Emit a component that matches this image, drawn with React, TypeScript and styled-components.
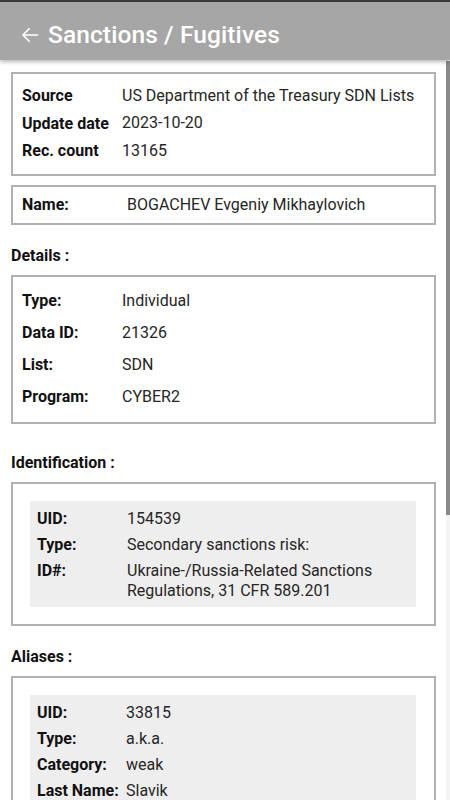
import React from 'react';
import styled, { createGlobalStyle } from 'styled-components';

interface Field {
  label: string;
  value: string;
}

const sourceInfo: Field[] = [
  { label: 'Source', value: 'US Department of the Treasury SDN Lists' },
  { label: 'Update date', value: '2023-10-20' },
  { label: 'Rec. count', value: '13165' },
];

const details: Field[] = [
  { label: 'Type:', value: 'Individual' },
  { label: 'Data ID:', value: '21326' },
  { label: 'List:', value: 'SDN' },
  { label: 'Program:', value: 'CYBER2' },
];

const identifications: Field[][] = [
  [
    { label: 'UID:', value: '154539' },
    { label: 'Type:', value: 'Secondary sanctions risk:' },
    { label: 'ID#:', value: 'Ukraine-/Russia-Related Sanctions Regulations, 31 CFR 589.201' },
  ],
];

const aliases: Field[][] = [
  [
    { label: 'UID:', value: '33815' },
    { label: 'Type:', value: 'a.k.a.' },
    { label: 'Category:', value: 'weak' },
    { label: 'Last Name:', value: 'Slavik' },
  ],
  [
    { label: 'UID:', value: '33816' },
    { label: 'Type:', value: 'a.k.a.' },
    { label: 'Category:', value: 'weak' },
    { label: 'Last Name:', value: 'lucky12345' },
  ],
];

const App: React.FC = () => {
  return (
    <>
      <GlobalStyle />
      <Screen>
        <Header>
          <BackIcon width="20" height="20" viewBox="0 0 24 24" fill="none">
            <path
              d="M21 12H3.5M11 4.5L3.5 12l7.5 7.5"
              stroke="currentColor"
              strokeWidth="2"
              strokeLinecap="round"
              strokeLinejoin="round"
            />
          </BackIcon>
          <Title>Sanctions / Fugitives</Title>
        </Header>

        <Body>
          <Content>
            <Box>
              {sourceInfo.map((f) => (
                <InfoRow key={f.label}>
                  <Label $width={100}>{f.label}</Label>
                  <Value>{f.value}</Value>
                </InfoRow>
              ))}
            </Box>

            <NameBox>
              <Label $width={105}>Name:</Label>
              <Value>BOGACHEV Evgeniy Mikhaylovich</Value>
            </NameBox>

            <SectionTitle>Details :</SectionTitle>
            <Box $bottom={29}>
              {details.map((f) => (
                <DetailRow key={f.label}>
                  <Label $width={100}>{f.label}</Label>
                  <Value>{f.value}</Value>
                </DetailRow>
              ))}
            </Box>

            <SectionTitle>Identification :</SectionTitle>
            <ListBox>
              {identifications.map((group, i) => (
                <Panel key={i}>
                  {group.map((f) => (
                    <PanelRow key={f.label}>
                      <Label $width={90}>{f.label}</Label>
                      <Value>{f.value}</Value>
                    </PanelRow>
                  ))}
                </Panel>
              ))}
            </ListBox>

            <SectionTitle>Aliases :</SectionTitle>
            <ListBox>
              {aliases.map((group, i) => (
                <Panel key={i}>
                  {group.map((f) => (
                    <PanelRow key={f.label}>
                      <Label $width={89}>{f.label}</Label>
                      <Value>{f.value}</Value>
                    </PanelRow>
                  ))}
                </Panel>
              ))}
            </ListBox>
          </Content>

          <ScrollTrack>
            <ScrollThumb />
          </ScrollTrack>
        </Body>
      </Screen>
    </>
  );
};

const GlobalStyle = createGlobalStyle`
  html, body {
    margin: 0;
    padding: 0;
    height: 100%;
    overflow: hidden;
    background: #ffffff;
  }
  body {
    font-family: Roboto, "Noto Sans", "Liberation Sans", sans-serif;
    color: #111;
  }
`;

const Screen = styled.div`
  display: flex;
  flex-direction: column;
  width: 450px;
  height: 800px;
  background: #fff;
`;

const Header = styled.header`
  flex: 0 0 auto;
  box-sizing: border-box;
  height: 60px;
  border-top: 2px solid #3b3b3b;
  background: #a6a6a6;
  display: flex;
  align-items: center;
  padding: 6px 0 0 20px;
  gap: 8px;
  color: #fff;
  box-shadow: 0 2px 4px rgba(0, 0, 0, 0.28);
  position: relative;
  z-index: 2;
`;

const BackIcon = styled.svg`
  display: block;
  margin-top: 1px;
`;

const Title = styled.h1`
  margin: 0;
  font-size: 24.5px;
  font-weight: 500;
  letter-spacing: 0.1px;
`;

const Body = styled.div`
  flex: 1 1 auto;
  display: flex;
  min-height: 0;
`;

const Content = styled.main`
  flex: 1 1 auto;
  overflow: hidden;
  padding: 12px 10px 20px 11px;
`;

const ScrollTrack = styled.div`
  flex: 0 0 4px;
  background: #f4f4f4;
  padding-top: 1px;
`;

const ScrollThumb = styled.div`
  height: 454px;
  background: #8a8a8a;
`;

const Box = styled.section<{ $bottom?: number }>`
  border: 2px solid #b0b0b0;
  padding: 8px 9px 9px;
  margin-bottom: ${({ $bottom }) => $bottom ?? 9}px;
`;

const NameBox = styled.section`
  border: 2px solid #b0b0b0;
  padding: 0 9px;
  height: 36px;
  display: flex;
  align-items: center;
  margin-bottom: 21px;
`;

const InfoRow = styled.div`
  display: flex;
  align-items: center;
  min-height: 27.5px;
`;

const DetailRow = styled.div`
  display: flex;
  align-items: center;
  min-height: 32px;
`;

const Label = styled.span<{ $width: number }>`
  flex: 0 0 ${({ $width }) => $width}px;
  font-size: 16px;
  font-weight: 700;
  color: #111;
`;

const Value = styled.span`
  flex: 1 1 auto;
  font-size: 16px;
  font-weight: 400;
  color: #262626;
  line-height: 20px;
`;

const SectionTitle = styled.h2`
  margin: 0 0 9px;
  font-size: 16px;
  font-weight: 700;
  line-height: 20px;
  color: #111;
`;

const ListBox = styled.section`
  border: 2px solid #b0b0b0;
  padding: 17px 18px 17px 17px;
  margin-bottom: 21px;
  display: flex;
  flex-direction: column;
  gap: 12px;
`;

const Panel = styled.div`
  background: #eeeeee;
  padding: 5px 7px 3px;
`;

const PanelRow = styled.div`
  display: flex;
  align-items: flex-start;
  padding: 3px 0;
  line-height: 20px;
`;

export default App;
